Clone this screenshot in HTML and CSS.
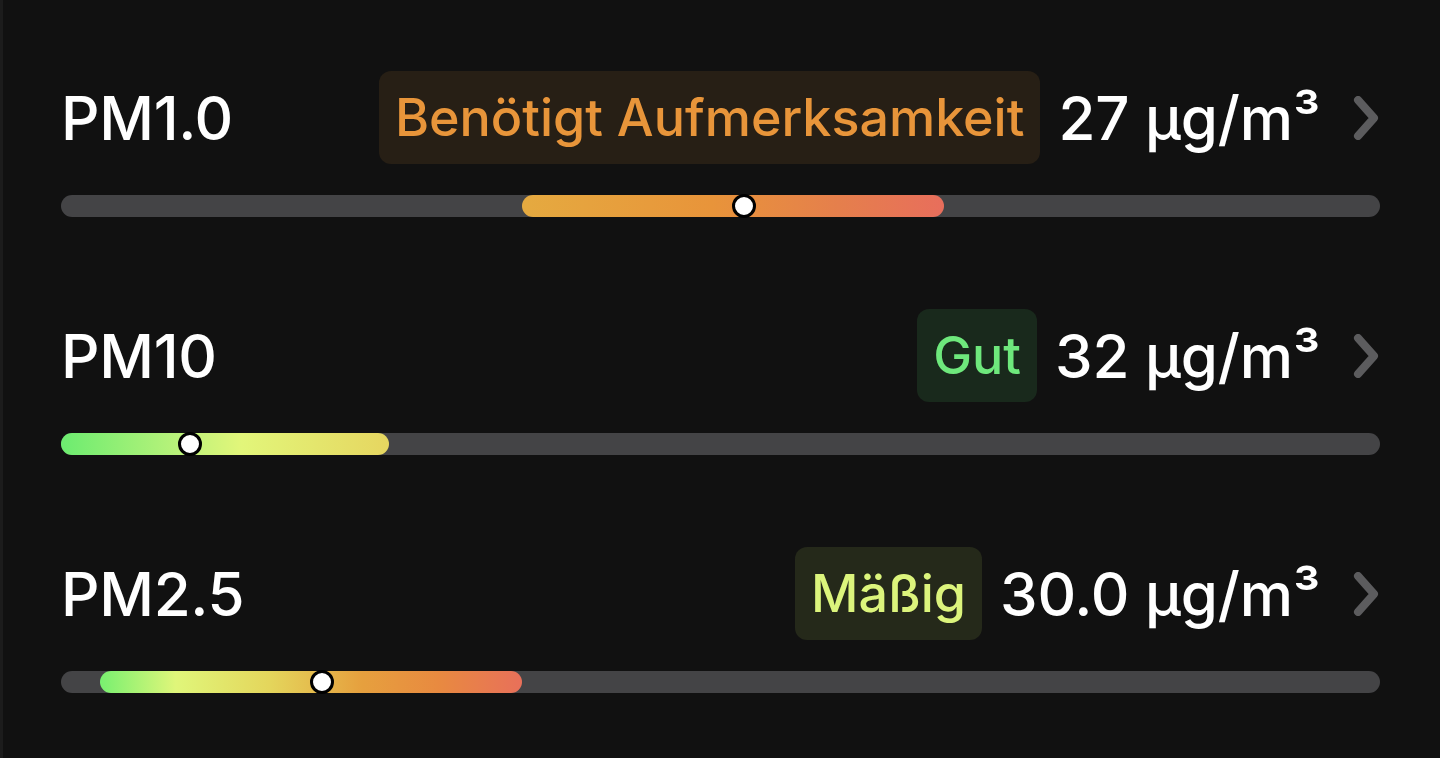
FILE: index.html
```html
<!DOCTYPE html>
<html lang="de">
<head>
<meta charset="utf-8">
<title>Feinstaub</title>
<link rel="stylesheet" href="styles.css">
</head>
<body>
<div class="edge"></div>
<main class="list">
  <section class="item">
    <div class="head">
      <span class="label">PM1.0</span>
      <span class="badge badge-orange">Benötigt Aufmerksamkeit</span>
      <span class="value">27 µg/m³</span>
      <svg class="chev" viewBox="0 0 28 44" width="28" height="44"><path d="M6 4 L22 22 L6 40" fill="none" stroke="#5c5c5e" stroke-width="8" stroke-linecap="round" stroke-linejoin="round"/></svg>
    </div>
    <div class="track">
      <div class="fill fill-orange" style="left:34.95%;width:32%"><span class="knob" style="left:52.6%"></span></div>
    </div>
  </section>
  <section class="item">
    <div class="head">
      <span class="label">PM10</span>
      <span class="badge badge-green">Gut</span>
      <span class="value">32 µg/m³</span>
      <svg class="chev" viewBox="0 0 28 44" width="28" height="44"><path d="M6 4 L22 22 L6 40" fill="none" stroke="#5c5c5e" stroke-width="8" stroke-linecap="round" stroke-linejoin="round"/></svg>
    </div>
    <div class="track">
      <div class="fill fill-green" style="left:0%;width:24.87%"><span class="knob" style="left:39.3%"></span></div>
    </div>
  </section>
  <section class="item">
    <div class="head">
      <span class="label">PM2.5</span>
      <span class="badge badge-yellow">Mäßig</span>
      <span class="value">30.0 µg/m³</span>
      <svg class="chev" viewBox="0 0 28 44" width="28" height="44"><path d="M6 4 L22 22 L6 40" fill="none" stroke="#5c5c5e" stroke-width="8" stroke-linecap="round" stroke-linejoin="round"/></svg>
    </div>
    <div class="track">
      <div class="fill fill-yellow" style="left:2.96%;width:32%"><span class="knob" style="left:52.6%"></span></div>
    </div>
  </section>
</main>
</body>
</html>
```
FILE: styles.css
```css
html, body {
  margin: 0;
  padding: 0;
  background: #111111;
  height: 100%;
  overflow: hidden;
}
body {
  font-family: Inter, "Liberation Sans", sans-serif;
  color: #ffffff;
  position: relative;
}
.edge {
  position: absolute;
  left: 0;
  top: 0;
  bottom: 0;
  width: 3px;
  background: #1c1c1c;
}
.list {
  display: flex;
  flex-direction: column;
  gap: 92px;
  padding: 71px 60px 0 61px;
}
.item {
  display: flex;
  flex-direction: column;
  gap: 31px;
}
.head {
  display: flex;
  align-items: center;
  height: 93px;
}
.label {
  flex: 1;
  font-size: 60px;
  font-weight: 500;
  letter-spacing: -0.3px;
}
.badge {
  height: 93px;
  box-sizing: border-box;
  display: flex;
  align-items: center;
  padding: 0 16px;
  border-radius: 12px;
  font-size: 52px;
  font-weight: 500;
}
.badge-orange { background: #271f15; color: #e8953a; }
.badge-green { background: #19291c; color: #6ee87c; }
.badge-yellow { background: #25291a; color: #dcf47c; }
.value {
  margin-left: 18px;
  font-size: 60px;
  font-weight: 500;
  letter-spacing: -0.2px;
}
.chev {
  margin-left: 32px;
  flex: none;
}
.track {
  position: relative;
  height: 22px;
  border-radius: 11px;
  background: #444446;
}
.fill {
  position: absolute;
  top: 0;
  height: 22px;
  border-radius: 11px;
}
.fill-orange { background: linear-gradient(90deg, #e5aa40 0%, #e8943a 45%, #e57f4c 75%, #e86e5c 100%); }
.fill-green { background: linear-gradient(90deg, #6cec70 0%, #b8f27a 35%, #e2f67a 55%, #e6d660 100%); }
.fill-yellow { background: linear-gradient(90deg, #78f070 0%, #e0f67a 18%, #e4d65c 40%, #e6a03e 62%, #e88a40 80%, #e8705a 100%); }
.knob {
  position: absolute;
  top: 50%;
  width: 18px;
  height: 18px;
  border: 3px solid #000;
  border-radius: 50%;
  background: #ffffff;
  transform: translate(-50%, -50%);
}
```
